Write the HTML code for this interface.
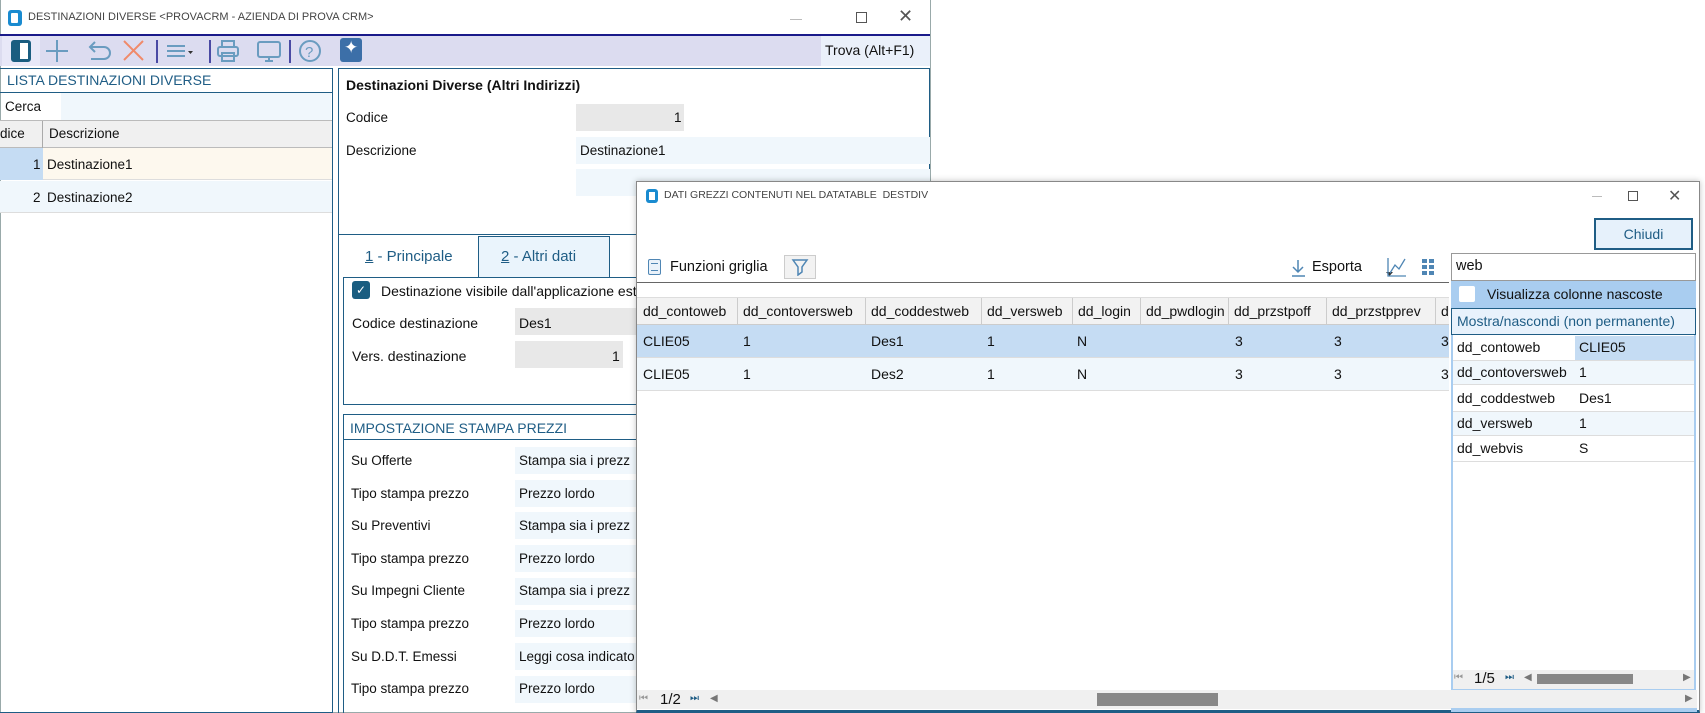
<!DOCTYPE html>
<html><head><meta charset="utf-8"><style>
*{box-sizing:border-box;margin:0;padding:0}
body{width:1705px;height:713px;overflow:hidden;background:#fff;font-family:"Liberation Sans",sans-serif;font-size:13.5px;color:#111;position:relative}
.a{position:absolute;white-space:nowrap}
.ttl{font-size:11px;color:#444}
.fld{background:#f0f7fc}
.gry{background:#e8e8e8}
.blue{color:#1f5d85}
</style></head><body>

<div class="a" style="left:0;top:0;width:931px;height:713px;border:1px solid #9aa;border-top:none;background:#fff"></div>
<div class="a" style="left:8px;top:10px;width:14px;height:16px;background:#1a8bd0;border-radius:3px"></div>
<div class="a" style="left:11px;top:13px;width:7px;height:10px;background:#fff;border-radius:1px"></div>
<div class="a ttl" style="left:28px;top:11px">DESTINAZIONI DIVERSE &lt;PROVACRM - AZIENDA DI PROVA CRM&gt;</div>
<div class="a" style="left:790px;top:19px;width:12px;height:1px;background:#bbb"></div>
<div class="a" style="left:856px;top:12px;width:11px;height:11px;border:1px solid #555"></div>
<div class="a" style="left:898px;top:6px;font-size:18px;color:#555">✕</div>

<div class="a" style="left:0;top:34px;width:930px;height:32px;background:#dcdcf0;border-top:2px solid #1a1a8a"></div>
<div class="a" style="left:2px;top:36px;width:38px;height:30px;background:#e8e8f8"></div>
<div class="a" style="left:11px;top:40px;width:20px;height:22px;border:3px solid #1a5d80;border-radius:3px;background:#fff"></div>
<div class="a" style="left:12px;top:41px;width:8px;height:20px;background:#1a5d80"></div>
<svg class="a" style="left:40px;top:36px" width="300" height="30">
<g stroke="#6a9cc0" stroke-width="2" fill="none">
<path d="M17 4v22M6 15h22"/>
<path d="M50 11h14a6 6 0 0 1 0 12h-13M55 6l-5 5 5 5"/>
</g>
<path d="M84 5l19 19M103 5l-19 19" stroke="#f08a6a" stroke-width="2"/>
<path d="M117 4v23" stroke="#1a1a8a" stroke-width="1.5"/>
<path d="M127 10h18M127 15h18M127 20h18" stroke="#6a9cc0" stroke-width="2"/>
<path d="M148 15h5l-2.5 3z" fill="#333"/>
<path d="M170 4v23" stroke="#1a1a8a" stroke-width="1.5"/>
<g stroke="#6a9cc0" stroke-width="2" fill="none">
<rect x="182" y="5" width="12" height="6"/><rect x="178" y="11" width="20" height="9" rx="2"/><rect x="182" y="17" width="12" height="8"/>
<rect x="218" y="6" width="22" height="15" rx="2"/><path d="M225 25h8M229 21v4"/>
</g>
<path d="M250 4v23" stroke="#1a1a8a" stroke-width="1.5"/>
<circle cx="270" cy="15" r="10" stroke="#6a9cc0" stroke-width="2" fill="none"/>
<text x="265" y="21" font-size="15" fill="#6a9cc0" font-family="Liberation Sans">?</text>
</svg>
<div class="a" style="left:340px;top:38px;width:22px;height:24px;background:#3c6fa8;border-radius:3px"></div>
<div class="a" style="left:344px;top:38px;color:#fff;font-size:17px">✦</div>
<div class="a" style="left:821px;top:36px;width:109px;height:30px;background:#eaf0fa"></div>
<div class="a" style="left:825px;top:42px;font-size:14px">Trova (Alt+F1)</div>

<div class="a" style="left:0;top:68px;width:333px;height:645px;border:1px solid #1f5d85;border-left:none"></div>
<div class="a blue" style="left:7px;top:72px;font-size:14px">LISTA DESTINAZIONI DIVERSE</div>
<div class="a" style="left:0;top:92px;width:332px;height:1px;background:#1f5d85"></div>
<div class="a fld" style="left:61px;top:93px;width:270px;height:27px"></div>
<div class="a" style="left:5px;top:99px">Cerca</div>
<div class="a" style="left:0;top:120px;width:332px;height:28px;background:#f0f0f0;border-top:1px solid #bbb;border-bottom:1px solid #bbb"></div>
<div class="a" style="left:42px;top:121px;width:1px;height:27px;background:#aaa"></div>
<div class="a" style="left:0;top:126px">dice</div>
<div class="a" style="left:49px;top:126px">Descrizione</div>
<div class="a" style="left:0;top:148px;width:43px;height:32px;background:#c5dcf3"></div>
<div class="a" style="left:43px;top:148px;width:289px;height:32px;background:#fdf8ee;border-bottom:1px solid #ddd"></div>
<div class="a" style="left:33px;top:157px">1</div>
<div class="a" style="left:47px;top:157px">Destinazione1</div>
<div class="a fld" style="left:0;top:181px;width:332px;height:32px;border-bottom:1px solid #ddd"></div>
<div class="a" style="left:33px;top:190px">2</div>
<div class="a" style="left:47px;top:190px">Destinazione2</div>

<div class="a" style="left:338px;top:68px;width:1px;height:645px;background:#1f5d85"></div>
<div class="a" style="left:338px;top:68px;width:592px;height:167px;border:1px solid #1f5d85"></div>
<div class="a" style="left:346px;top:77px;font-weight:bold;font-size:14px">Destinazioni Diverse (Altri Indirizzi)</div>
<div class="a" style="left:346px;top:110px">Codice</div>
<div class="a gry" style="left:576px;top:104px;width:108px;height:27px"></div>
<div class="a" style="left:674px;top:110px">1</div>
<div class="a" style="left:346px;top:143px">Descrizione</div>
<div class="a fld" style="left:576px;top:137px;width:354px;height:27px"></div>
<div class="a" style="left:580px;top:143px">Destinazione1</div>
<div class="a fld" style="left:576px;top:169px;width:354px;height:27px"></div>

<div class="a" style="left:365px;top:248px;font-size:15px;color:#1f5d85"><u>1</u> - Principale</div>
<div class="a" style="left:478px;top:236px;width:132px;height:42px;background:#eaf4fc;border:1px solid #1f5d85;border-bottom:none"></div>
<div class="a" style="left:501px;top:248px;font-size:15px;color:#1f5d85"><u>2</u> - Altri dati</div>
<div class="a" style="left:343px;top:277px;width:300px;height:128px;border:1px solid #1f5d85"></div>
<div class="a" style="left:352px;top:281px;width:18px;height:18px;background:#1a5d80;border-radius:3px;color:#fff;font-size:12px;text-align:center;line-height:18px">✓</div>
<div class="a" style="left:381px;top:283px;font-size:14px">Destinazione visibile dall'applicazione est</div>
<div class="a" style="left:352px;top:315px;font-size:14px">Codice destinazione</div>
<div class="a gry" style="left:515px;top:308px;width:122px;height:27px"></div>
<div class="a" style="left:519px;top:315px;font-size:14px">Des1</div>
<div class="a" style="left:352px;top:348px;font-size:14px">Vers. destinazione</div>
<div class="a gry" style="left:515px;top:341px;width:108px;height:27px"></div>
<div class="a" style="left:612px;top:348px;font-size:14px">1</div>

<div class="a" style="left:343px;top:414px;width:300px;height:299px;border:1px solid #1f5d85;border-bottom:none"></div>
<div class="a" style="left:343px;top:439px;width:300px;height:1px;background:#1f5d85"></div>
<div class="a blue" style="left:350px;top:420px;font-size:14px">IMPOSTAZIONE STAMPA PREZZI</div>
<div class="a" style="left:351px;top:445px;line-height:32.6px">Su Offerte<br>Tipo stampa prezzo<br>Su Preventivi<br>Tipo stampa prezzo<br>Su Impegni Cliente<br>Tipo stampa prezzo<br>Su D.D.T. Emessi<br>Tipo stampa prezzo</div>
<div class="a fld" style="left:515px;top:447px;width:122px;height:27px"></div>
<div class="a fld" style="left:515px;top:480px;width:122px;height:27px"></div>
<div class="a fld" style="left:515px;top:512px;width:122px;height:27px"></div>
<div class="a fld" style="left:515px;top:545px;width:122px;height:27px"></div>
<div class="a fld" style="left:515px;top:578px;width:122px;height:27px"></div>
<div class="a fld" style="left:515px;top:610px;width:122px;height:27px"></div>
<div class="a fld" style="left:515px;top:643px;width:122px;height:27px"></div>
<div class="a fld" style="left:515px;top:676px;width:122px;height:27px"></div>
<div class="a" style="left:519px;top:445px;line-height:32.6px">Stampa sia i prezz<br>Prezzo lordo<br>Stampa sia i prezz<br>Prezzo lordo<br>Stampa sia i prezz<br>Prezzo lordo<br>Leggi cosa indicato<br>Prezzo lordo</div>

<!-- SECOND WINDOW -->
<div class="a" style="left:636px;top:181px;width:1064px;height:532px;background:#fff;border:1px solid #888;border-bottom:3px solid #1f5d85;box-shadow:0 0 6px rgba(0,0,0,.25)"></div>
<div class="a" style="left:646px;top:189px;width:12px;height:14px;background:#1a8bd0;border-radius:3px"></div>
<div class="a" style="left:649px;top:192px;width:6px;height:8px;background:#fff"></div>
<div class="a ttl" style="left:664px;top:189px;font-size:10.5px">DATI GREZZI CONTENUTI NEL DATATABLE&nbsp; DESTDIV</div>
<div class="a" style="left:1592px;top:196px;width:10px;height:1px;background:#bbb"></div>
<div class="a" style="left:1628px;top:191px;width:10px;height:10px;border:1px solid #555"></div>
<div class="a" style="left:1668px;top:186px;font-size:16px;color:#555">✕</div>
<div class="a" style="left:1594px;top:218px;width:99px;height:32px;background:#e6f1fb;border:2px solid #1f5d85;text-align:center;line-height:28px;color:#1f5d85;font-size:14px">Chiudi</div>

<div class="a" style="left:648px;top:259px;width:13px;height:16px;border:1.5px solid #4f86b4;border-radius:2px;background:#eaf2fa"></div>
<div class="a" style="left:651px;top:263px;width:7px;height:8px;border-top:1px solid #4f86b4;border-bottom:1px solid #4f86b4"></div>
<div class="a" style="left:670px;top:259px;font-size:14.5px">Funzioni griglia</div>
<div class="a" style="left:784px;top:255px;width:32px;height:24px;background:#f2f2f2;border:1px solid #ccc"></div>
<svg class="a" style="left:790px;top:258px" width="20" height="18"><path d="M3 2h14l-5 7v5l-4 3V9z" fill="none" stroke="#4f86b4" stroke-width="1.5"/></svg>
<svg class="a" style="left:1290px;top:258px" width="110" height="22"><path d="M8 2v12M3 9l5 5 5-5M2 18h13" stroke="#4f86b4" stroke-width="1.5" fill="none"/><path d="M96 14l3.5 4 3.5-4z" fill="#333"/></svg>
<div class="a" style="left:1312px;top:259px;font-size:14.5px">Esporta</div>
<svg class="a" style="left:1386px;top:256px" width="50" height="22"><path d="M2 2v18h18M4 17l5-8 4 4 6-10" stroke="#4f86b4" stroke-width="1.3" fill="none"/><g fill="#4f86b4"><rect x="36" y="3" width="5" height="4"/><rect x="43" y="3" width="5" height="4"/><rect x="36" y="9" width="5" height="4"/><rect x="43" y="9" width="5" height="4"/><rect x="36" y="15" width="5" height="4"/><rect x="43" y="15" width="5" height="4"/></g></svg>
<div class="a" style="left:637px;top:282px;width:812px;height:1px;background:#666"></div>

<div class="a" style="left:637px;top:297px;width:812px;height:28px;background:#f2f2f2;border-top:1px solid #ddd;border-bottom:1px solid #ccc"></div>
<div class="a" style="left:637px;top:325px;width:812px;height:33px;background:#c5dcf3;border-bottom:1px solid #ddd"></div>
<div class="a" style="left:637px;top:358px;width:812px;height:33px;background:#f0f7fc;border-bottom:1px solid #ddd"></div>
<div class="a" style="left:737px;top:298px;width:1px;height:27px;background:#ccc"></div>
<div class="a" style="left:865px;top:298px;width:1px;height:27px;background:#ccc"></div>
<div class="a" style="left:981px;top:298px;width:1px;height:27px;background:#ccc"></div>
<div class="a" style="left:1072px;top:298px;width:1px;height:27px;background:#ccc"></div>
<div class="a" style="left:1140px;top:298px;width:1px;height:27px;background:#ccc"></div>
<div class="a" style="left:1228px;top:298px;width:1px;height:27px;background:#ccc"></div>
<div class="a" style="left:1326px;top:298px;width:1px;height:27px;background:#ccc"></div>
<div class="a" style="left:1435px;top:298px;width:1px;height:27px;background:#ccc"></div>
<div class="a" style="left:643px;top:303px;font-size:14px">dd_contoweb</div>
<div class="a" style="left:743px;top:303px;font-size:14px">dd_contoversweb</div>
<div class="a" style="left:871px;top:303px;font-size:14px">dd_coddestweb</div>
<div class="a" style="left:987px;top:303px;font-size:14px">dd_versweb</div>
<div class="a" style="left:1078px;top:303px;font-size:14px">dd_login</div>
<div class="a" style="left:1146px;top:303px;font-size:14px">dd_pwdlogin</div>
<div class="a" style="left:1234px;top:303px;font-size:14px">dd_przstpoff</div>
<div class="a" style="left:1332px;top:303px;font-size:14px">dd_przstpprev</div>
<div class="a" style="left:1441px;top:303px;font-size:14px">d</div>
<div class="a" style="left:643px;top:325px;line-height:33px;font-size:14px">CLIE05<br>CLIE05</div>
<div class="a" style="left:743px;top:325px;line-height:33px;font-size:14px">1<br>1</div>
<div class="a" style="left:871px;top:325px;line-height:33px;font-size:14px">Des1<br>Des2</div>
<div class="a" style="left:987px;top:325px;line-height:33px;font-size:14px">1<br>1</div>
<div class="a" style="left:1077px;top:325px;line-height:33px;font-size:14px">N<br>N</div>
<div class="a" style="left:1235px;top:325px;line-height:33px;font-size:14px">3<br>3</div>
<div class="a" style="left:1334px;top:325px;line-height:33px;font-size:14px">3<br>3</div>
<div class="a" style="left:1441px;top:325px;line-height:33px;font-size:14px">3<br>3</div>

<div class="a" style="left:1451px;top:253px;width:245px;height:28px;border:1px solid #999;background:#fff"></div>
<div class="a" style="left:1456px;top:258px;font-size:14.5px">web</div>
<div class="a" style="left:1451px;top:281px;width:245px;height:410px;border:2px solid #a9cdf0;border-top:none"></div>
<div class="a" style="left:1451px;top:281px;width:245px;height:27px;background:#a9cdf0"></div>
<div class="a" style="left:1459px;top:286px;width:16px;height:16px;background:#fff;border-radius:2px"></div>
<div class="a" style="left:1487px;top:286px;font-size:14px">Visualizza colonne nascoste</div>
<div class="a" style="left:1451px;top:308px;width:245px;height:27px;background:#e8f2fc;border:1.5px solid #1f5d85"></div>
<div class="a" style="left:1457px;top:313px;font-size:14px;color:#1f5d85">Mostra/nascondi (non permanente)</div>
<div class="a" style="left:1575px;top:336px;width:119px;height:24px;background:#c5dcf3"></div>
<div class="a" style="left:1453px;top:360px;width:241px;height:25px;background:#f0f7fc;border-top:1px solid #ddd;border-bottom:1px solid #ddd"></div>
<div class="a" style="left:1453px;top:411px;width:241px;height:25px;background:#f0f7fc;border-top:1px solid #ddd;border-bottom:1px solid #ddd"></div>
<div class="a" style="left:1453px;top:461px;width:241px;height:1px;background:#ddd"></div>
<div class="a" style="left:1457px;top:335px;line-height:25.3px;font-size:14px">dd_contoweb<br>dd_contoversweb<br>dd_coddestweb<br>dd_versweb<br>dd_webvis</div>
<div class="a" style="left:1579px;top:335px;line-height:25.3px;font-size:14px">CLIE05<br>1<br>Des1<br>1<br>S</div>
<div class="a" style="left:1453px;top:670px;width:241px;height:19px;background:#f0f0f0"></div>
<div class="a" style="left:1454px;top:672px;font-size:10px;color:#999">⏮</div>
<div class="a" style="left:1474px;top:670px;font-size:15px">1/5</div>
<div class="a" style="left:1505px;top:672px;font-size:10px;color:#1f5d85">⏭</div>
<div class="a" style="left:1537px;top:674px;width:96px;height:10px;background:#888"></div>
<div class="a" style="left:1524px;top:672px;font-size:10px;color:#777">◀</div>
<div class="a" style="left:1683px;top:672px;font-size:10px;color:#777">▶</div>

<div class="a" style="left:637px;top:690px;width:1060px;height:19px;background:#f0f0f0"></div>
<div class="a" style="left:639px;top:693px;font-size:10px;color:#999">⏮</div>
<div class="a" style="left:660px;top:691px;font-size:15px">1/2</div>
<div class="a" style="left:690px;top:693px;font-size:10px;color:#1f5d85">⏭</div>
<div class="a" style="left:1097px;top:693px;width:121px;height:13px;background:#888"></div>
<div class="a" style="left:710px;top:693px;font-size:10px;color:#777">◀</div>
<div class="a" style="left:1685px;top:693px;font-size:10px;color:#777">▶</div>
<div class="a" style="left:1451px;top:708px;width:246px;height:4px;background:#a9cdf0"></div>
</body></html>
